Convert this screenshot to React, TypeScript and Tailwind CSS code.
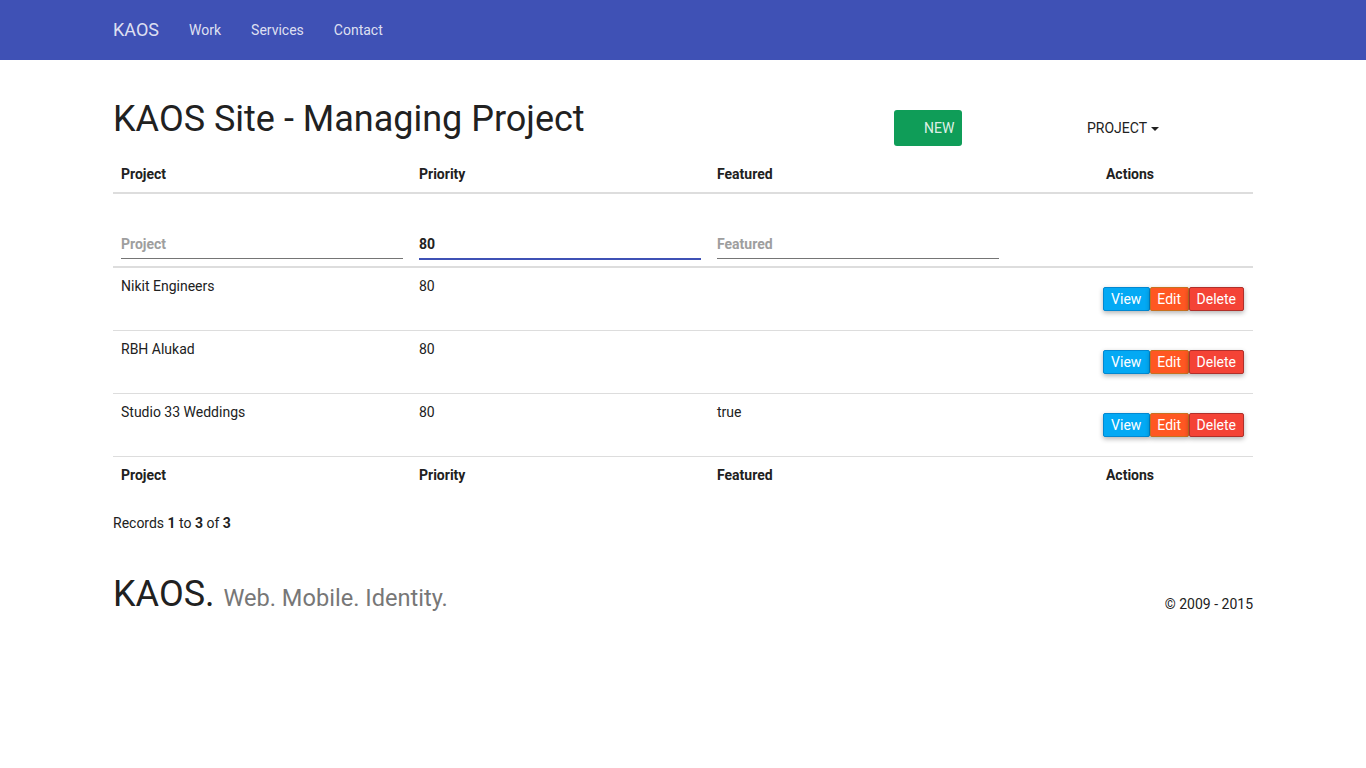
import React from "react";

type Row = { project: string; priority: string; featured: string };

const rows: Row[] = [
  { project: "Nikit Engineers", priority: "80", featured: "" },
  { project: "RBH Alukad", priority: "80", featured: "" },
  { project: "Studio 33 Weddings", priority: "80", featured: "true" },
];

function Navbar() {
  return (
    <nav className="h-[60px] bg-[#3f51b5] text-[rgba(255,255,255,0.84)]">
      <div className="mx-auto flex h-full w-[1140px] items-center">
        <span className="pr-[15px] text-[18px] leading-[20px]">KAOS</span>
        <a className="px-[15px] text-[14px] leading-[20px]">Work</a>
        <a className="px-[15px] text-[14px] leading-[20px]">Services</a>
        <a className="px-[15px] text-[14px] leading-[20px]">Contact</a>
      </div>
    </nav>
  );
}

function ActionButtons() {
  return (
    <div className="my-[11px] mr-[1px] flex justify-end">
      <button className="h-[24px] rounded-[2px] border border-[#0288d1] bg-[#03a9f4] px-[7.5px] text-[14px] leading-[22px] text-white shadow-[0_2px_5px_rgba(0,0,0,0.3)]">
        View
      </button>
      <button className="h-[24px] rounded-[2px] border border-[#c7701f] bg-[#ff5722] px-[6.5px] text-[14px] leading-[22px] text-white shadow-[0_2px_5px_rgba(0,0,0,0.3)]">
        Edit
      </button>
      <button className="h-[24px] rounded-[2px] border border-[#b0302a] bg-[#f44336] px-[7px] text-[14px] leading-[22px] text-white shadow-[0_2px_5px_rgba(0,0,0,0.3)]">
        Delete
      </button>
    </div>
  );
}

function HeadCells() {
  return (
    <>
      <th className="w-[298px] p-[8px] text-left font-bold">Project</th>
      <th className="w-[298px] p-[8px] text-left font-bold">Priority</th>
      <th className="w-[298px] p-[8px] text-left font-bold">Featured</th>
      <th className="w-[246px] p-[8px] text-center font-bold">Actions</th>
    </>
  );
}

export default function App() {
  return (
    <div className="min-h-[768px] bg-white font-['Roboto',sans-serif] text-[14px] leading-[20px] text-[#212121]">
      <Navbar />

      <main className="mx-auto w-[1140px] pt-[40px]">
        <div className="flex">
          <h1 className="w-[780px] text-[36px] leading-[39.6px] font-normal">
            KAOS Site - Managing Project
          </h1>
          <div className="w-[195px] pl-[1px] pt-[10px]">
            <button className="h-[36px] w-[68px] rounded-[3px] bg-[#0f9d58] pl-[30px] pr-[8px] text-right text-[14px] text-[rgba(255,255,255,0.87)]">
              NEW
            </button>
          </div>
          <div className="flex w-[165px] items-start pt-[18px]">
            <span className="-ml-[1px] flex items-center text-[14px] uppercase">
              Project
              <span className="ml-[4px] mt-[1px] h-0 w-0 border-x-[4px] border-t-[4px] border-x-transparent border-t-[#212121]" />
            </span>
          </div>
        </div>

        <table className="mt-[10px] w-[1140px] table-fixed border-collapse">
          <thead>
            <tr className="border-b-2 border-[#ddd]">
              <HeadCells />
            </tr>
            <tr className="border-b-2 border-[#ddd]">
              <th className="p-[8px] pb-[6px] pt-[36px] text-left font-bold">
                <input
                  placeholder="Project"
                  className="mb-[1px] h-[29px] w-full border-b border-[#757575] bg-transparent font-bold outline-none placeholder:text-[#9e9e9e]"
                />
              </th>
              <th className="p-[8px] pb-[6px] pt-[36px] text-left font-bold">
                <input
                  defaultValue="80"
                  className="h-[30px] w-full border-b-2 border-[#3f51b5] bg-transparent font-bold text-[#212121] outline-none"
                />
              </th>
              <th className="p-[8px] pb-[6px] pt-[36px] text-left font-bold">
                <input
                  placeholder="Featured"
                  className="mb-[1px] h-[29px] w-full border-b border-[#757575] bg-transparent font-bold outline-none placeholder:text-[#9e9e9e]"
                />
              </th>
              <th className="p-[8px]" />
            </tr>
          </thead>
          <tbody>
            {rows.map((r) => (
              <tr key={r.project} className="border-b border-[#ddd]">
                <td className="p-[8px] align-top">{r.project}</td>
                <td className="p-[8px] align-top">{r.priority}</td>
                <td className="p-[8px] align-top">{r.featured}</td>
                <td className="p-[8px] align-top">
                  <ActionButtons />
                </td>
              </tr>
            ))}
          </tbody>
          <tfoot>
            <tr>
              <HeadCells />
            </tr>
          </tfoot>
        </table>

        <p className="mt-[20px]">
          Records <b>1</b> to <b>3</b> of <b>3</b>
        </p>

        <footer className="mt-[42px] flex items-end justify-between">
          <h2 className="text-[36px] leading-[39.6px] font-normal">
            KAOS. <small className="text-[23.6px] text-[#777]">Web. Mobile. Identity.</small>
          </h2>
          <span className="mb-[5px]">© 2009 - 2015</span>
        </footer>
      </main>
    </div>
  );
}
